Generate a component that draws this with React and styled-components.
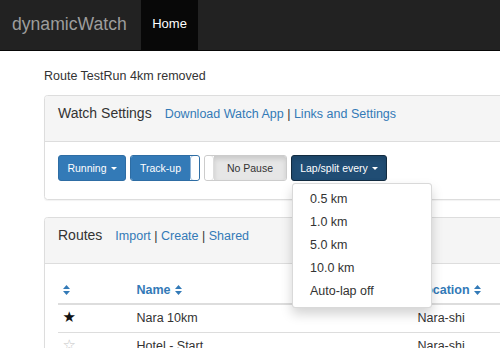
import React from 'react'
import styled, { createGlobalStyle } from 'styled-components'

const GlobalStyle = createGlobalStyle`
  html, body {
    margin: 0;
    padding: 0;
    overflow: hidden;
    background: #fff;
  }
  body {
    font-family: "Liberation Sans", Arial, sans-serif;
    font-size: 12.5px;
    line-height: 17px;
    color: #333;
  }
`

const Navbar = styled.nav`
  display: flex;
  height: 50px;
  background: #222;
  border-bottom: 1px solid #080808;
`

const Brand = styled.div`
  padding: 0 14px 0 12px;
  font-size: 17.6px;
  line-height: 48px;
  color: #9d9d9d;
`

const NavItem = styled.div`
  padding: 0 11.5px;
  font-size: 13px;
  line-height: 48px;
  color: ${p => (p.$active ? '#fff' : '#9d9d9d')};
  background: ${p => (p.$active ? '#080808' : 'transparent')};
`

const Main = styled.main`
  width: 620px;
  padding: 17px 0 0 44px;
`

const Notice = styled.p`
  margin: 0 0 10px;
`

const Panel = styled.section`
  border: 1px solid #ddd;
  border-radius: 3.5px;
  margin-bottom: 17px;
  box-shadow: 0 1px 1px rgba(0, 0, 0, 0.05);
`

const PanelHeading = styled.div`
  display: flex;
  align-items: baseline;
  padding: 7px 13px 17px;
  line-height: 20px;
  background: #f5f5f5;
  border-bottom: 1px solid #ddd;
  border-radius: 3px 3px 0 0;
`

const PanelTitle = styled.span`
  font-size: 14px;
  color: #333;
  margin-right: 13px;
`

const Link = styled.a`
  color: #337ab7;
  text-decoration: none;
`

const Sep = styled.span`
  color: #333;
`

const PanelBody = styled.div`
  padding: ${p => p.$padding || '13px'};
`

const Toolbar = styled.div`
  display: flex;
  gap: 4px;
`

const Btn = styled.button`
  display: flex;
  align-items: center;
  justify-content: center;
  width: ${p => p.$width}px;
  height: 26px;
  padding: 0;
  font-family: inherit;
  font-size: 10.5px;
  color: #fff;
  background: ${p => (p.$active ? '#204d74' : '#337ab7')};
  border: 1px solid ${p => (p.$active ? '#122b40' : '#2e6da4')};
  border-radius: 3px;
  box-shadow: ${p => (p.$active ? 'inset 0 3px 5px rgba(0,0,0,.125)' : 'none')};
`

const Caret = styled.span`
  display: inline-block;
  margin-left: 4px;
  border-top: 3.5px solid currentColor;
  border-left: 3px solid transparent;
  border-right: 3px solid transparent;
`

const Toggle = styled.div`
  display: flex;
  flex-direction: ${p => (p.$on ? 'row' : 'row-reverse')};
  width: ${p => p.$width}px;
  height: 26px;
  box-sizing: border-box;
  border: 1px solid ${p => (p.$on ? '#2e6da4' : '#ccc')};
  border-radius: 3px;
  overflow: hidden;
`

const ToggleLabel = styled.span`
  flex: 1;
  display: flex;
  align-items: center;
  justify-content: center;
  font-size: 10.5px;
  color: ${p => (p.$on ? '#fff' : '#333')};
  background: ${p => (p.$on ? '#337ab7' : '#e6e6e6')};
  box-shadow: ${p => (p.$on ? 'none' : 'inset 0 3px 5px rgba(0,0,0,.125)')};
`

const ToggleHandle = styled.span`
  width: 9px;
  background: #fff;
  border-radius: 3px;
  box-shadow: ${p => (p.$on ? 'inset 1px 0 0 #8fb3d6' : 'inset -1px 0 0 #ddd')};
`

const DropWrap = styled.div`
  position: relative;
`

const Menu = styled.ul`
  position: absolute;
  top: 100%;
  left: 1px;
  z-index: 10;
  margin: 2px 0 0;
  padding: 4px 0;
  width: 140px;
  box-sizing: border-box;
  list-style: none;
  background: #fff;
  border: 1px solid rgba(0, 0, 0, 0.15);
  border-radius: 3.5px;
  box-shadow: 0 6px 12px rgba(0, 0, 0, 0.175);
`

const MenuItem = styled.li`
  padding: 3px 17px;
  line-height: 17px;
  color: #333;
  white-space: nowrap;
`

const Table = styled.table`
  width: 560px;
  table-layout: fixed;
  border-collapse: separate;
  border-spacing: 0;
`

const Th = styled.th`
  width: ${p => p.$w}px;
  padding: 5px 4.5px 4px;
  text-align: left;
  font-weight: bold;
  color: #337ab7;
  border-bottom: 2px solid #ddd;
  white-space: nowrap;
`

const Td = styled.td`
  padding: 4px 4.5px 5px;
  border-bottom: 1px solid #ddd;
  white-space: nowrap;
`

const Star = styled.span`
  font-family: "DejaVu Sans", sans-serif;
  font-size: 15px;
  line-height: 17px;
  color: ${p => (p.$filled ? '#111' : '#c4c4c4')};
`

const SortIcon = styled.svg`
  width: 7px;
  height: 10px;
  vertical-align: -1px;
  margin-left: ${p => (p.$gap ? '4px' : '0')};
`

function Sort({ gap }) {
  return (
    <SortIcon viewBox="0 0 7 10" $gap={gap}>
      <path d="M3.5 0 L7 4 H0 Z M0 6 H7 L3.5 10 Z" fill="#337ab7" />
    </SortIcon>
  )
}

const laps = ['0.5 km', '1.0 km', '5.0 km', '10.0 km', 'Auto-lap off']

const routes = [
  { fav: true, name: 'Nara 10km', place: 'Nara-shi' },
  { fav: false, name: 'Hotel - Start', place: 'Nara-shi' },
]

export default function App() {
  return (
    <>
      <GlobalStyle />
      <Navbar>
        <Brand>dynamicWatch</Brand>
        <NavItem $active>Home</NavItem>
      </Navbar>
      <Main>
        <Notice>Route TestRun 4km removed</Notice>

        <Panel>
          <PanelHeading>
            <PanelTitle>Watch Settings</PanelTitle>
            <span>
              <Link>Download Watch App</Link> <Sep>|</Sep> <Link>Links and Settings</Link>
            </span>
          </PanelHeading>
          <PanelBody $padding="13px 13px 18px">
            <Toolbar>
              <Btn $width={68}>
                Running<Caret />
              </Btn>
              <Toggle $on $width={70}>
                <ToggleLabel $on>Track-up</ToggleLabel>
                <ToggleHandle $on />
              </Toggle>
              <Toggle $width={83}>
                <ToggleLabel>No Pause</ToggleLabel>
                <ToggleHandle />
              </Toggle>
              <DropWrap>
                <Btn $active $width={96}>
                  Lap/split every<Caret />
                </Btn>
                <Menu>
                  {laps.map(l => (
                    <MenuItem key={l}>{l}</MenuItem>
                  ))}
                </Menu>
              </DropWrap>
            </Toolbar>
          </PanelBody>
        </Panel>

        <Panel>
          <PanelHeading>
            <PanelTitle>Routes</PanelTitle>
            <span>
              <Link>Import</Link> <Sep>|</Sep> <Link>Create</Link> <Sep>|</Sep> <Link>Shared</Link>
            </span>
          </PanelHeading>
          <PanelBody>
            <Table>
              <thead>
                <tr>
                  <Th $w={65}>
                    <Sort />
                  </Th>
                  <Th $w={272}>
                    Name<Sort gap />
                  </Th>
                  <Th $w={196}>
                    Location<Sort gap />
                  </Th>
                </tr>
              </thead>
              <tbody>
                {routes.map(r => (
                  <tr key={r.name}>
                    <Td>
                      <Star $filled={r.fav}>{r.fav ? '★' : '☆'}</Star>
                    </Td>
                    <Td>{r.name}</Td>
                    <Td>{r.place}</Td>
                  </tr>
                ))}
              </tbody>
            </Table>
          </PanelBody>
        </Panel>
      </Main>
    </>
  )
}
